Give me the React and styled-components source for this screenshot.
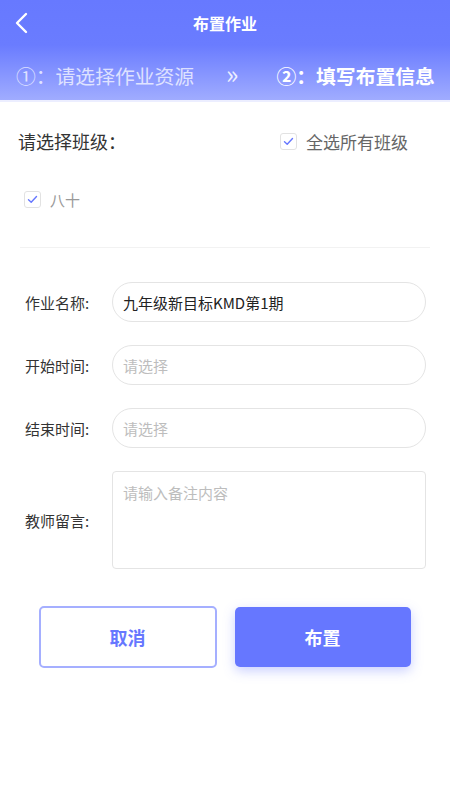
import React from "react";
import styled, { createGlobalStyle } from "styled-components";

const Global = createGlobalStyle`
  html, body { margin: 0; padding: 0; background: #fff; }
  body { font-family: "Noto Sans CJK SC", "Noto Sans", sans-serif; }
  * { box-sizing: border-box; }
`;

const Page = styled.div`
  width: 450px;
  min-height: 800px;
  background: #fff;
`;

const Header = styled.header`
  background: linear-gradient(180deg, #6779ff 0%, #6a7cff 45%, #a0acff 100%);
  border-bottom: 2px solid #eceeff;
`;

const NavBar = styled.div`
  height: 50px;
  display: flex;
  align-items: center;
  justify-content: center;
  position: relative;
`;

const Back = styled.span`
  position: absolute;
  left: 12px;
  top: 10px;
  width: 20px;
  height: 26px;
  display: flex;
`;

const Title = styled.h1`
  margin: 0;
  margin-top: -4px;
  color: #fff;
  font-size: 16px;
  font-weight: 700;
`;

const Steps = styled.div`
  height: 50px;
  display: flex;
  align-items: center;
  padding: 0 0 0 16px;
`;

const Step = styled.span`
  color: #fff;
  font-size: 19.8px;
  font-weight: ${(p) => (p.$active ? 700 : 400)};
  opacity: ${(p) => (p.$active ? 1 : 0.72)};
  white-space: nowrap;
`;

const Arrow = styled.span`
  color: #fff;
  opacity: 0.85;
  font-size: 26px;
  line-height: 1;
  margin: -4px 38px 0 32px;
  font-weight: 400;
`;

const Section = styled.section`
  padding: 0 20px;
`;

const ClassHead = styled.div`
  display: flex;
  justify-content: space-between;
  align-items: center;
  padding: 26px 22px 0 0;
  margin-left: -2px;
`;

const SectionLabel = styled.span`
  font-size: 18px;
  color: #333;
`;

const CheckRow = styled.label`
  display: flex;
  align-items: center;
  gap: 9px;
  font-size: ${(p) => p.$size || 17}px;
  color: ${(p) => p.$color || "#666"};
`;

const Box = styled.span`
  width: 17px;
  height: 17px;
  border: 1px solid #e2e2e2;
  border-radius: 3px;
  display: flex;
  align-items: center;
  justify-content: center;
  background: #fff;
`;

const ClassList = styled.div`
  padding: 35px 0 0 4px;
  height: 93px;
`;

const Divider = styled.div`
  height: 1px;
  background: #f2f2f2;
`;

const Form = styled.div`
  padding: 34px 24px 0 25px;
  display: flex;
  flex-direction: column;
  gap: 23px;
`;

const Row = styled.div`
  display: flex;
  align-items: center;
`;

const Label = styled.span`
  width: 87px;
  flex: none;
  font-size: 15px;
  color: #333;
`;

const Field = styled.div`
  flex: 1;
  height: ${(p) => (p.$tall ? 98 : 40)}px;
  border: 1px solid #e4e4e4;
  border-radius: ${(p) => (p.$tall ? 4 : 20)}px;
  padding: ${(p) => (p.$tall ? "10px 10px" : "0 10px")};
  display: flex;
  align-items: ${(p) => (p.$tall ? "flex-start" : "center")};
  font-size: 15px;
  color: ${(p) => (p.$placeholder ? "#bdbdbd" : "#222")};
`;

const Buttons = styled.div`
  display: flex;
  justify-content: center;
  gap: 18px;
  padding: 37px 0 0 0;
  margin-left: -1px;
`;

const Button = styled.button`
  width: ${(p) => (p.$primary ? 176 : 178)}px;
  height: ${(p) => (p.$primary ? 60 : 62)}px;
  margin-top: ${(p) => (p.$primary ? 1 : 0)}px;
  border-radius: 5px;
  border: ${(p) => (p.$primary ? "none" : "2px solid #a5afff")};
  background: ${(p) => (p.$primary ? "#6677ff" : "#fff")};
  color: ${(p) => (p.$primary ? "#fff" : "#6677ff")};
  font-family: inherit;
  font-size: 18px;
  font-weight: 700;
  box-shadow: ${(p) => (p.$primary ? "0 4px 12px rgba(102,119,255,0.35)" : "none")};
`;

const Check = () => (
  <svg width="11" height="9" viewBox="0 0 11 9">
    <path d="M1.5 4.8 L4.2 7.3 L9.5 1.6" fill="none" stroke="#6677ff" strokeWidth="1.4" strokeLinecap="round" strokeLinejoin="round" />
  </svg>
);

export default function App() {
  return (
    <Page>
      <Global />
      <Header>
        <NavBar>
          <Back>
            <svg width="20" height="26" viewBox="0 0 20 26">
              <path d="M14 4 L5 13 L14 22" fill="none" stroke="#fff" strokeWidth="2.4" strokeLinecap="round" strokeLinejoin="round" />
            </svg>
          </Back>
          <Title>布置作业</Title>
        </NavBar>
        <Steps>
          <Step>①：请选择作业资源</Step>
          <Arrow>»</Arrow>
          <Step $active>②：填写布置信息</Step>
        </Steps>
      </Header>
      <Section>
        <ClassHead>
          <SectionLabel>请选择班级：</SectionLabel>
          <CheckRow>
            <Box><Check /></Box>
            全选所有班级
          </CheckRow>
        </ClassHead>
        <ClassList>
          <CheckRow $size={15} $color="#999">
            <Box><Check /></Box>
            八十
          </CheckRow>
        </ClassList>
        <Divider />
      </Section>
      <Form>
        <Row>
          <Label>作业名称:</Label>
          <Field>九年级新目标KMD第1期</Field>
        </Row>
        <Row>
          <Label>开始时间:</Label>
          <Field $placeholder>请选择</Field>
        </Row>
        <Row>
          <Label>结束时间:</Label>
          <Field $placeholder>请选择</Field>
        </Row>
        <Row>
          <Label>教师留言:</Label>
          <Field $tall $placeholder>请输入备注内容</Field>
        </Row>
      </Form>
      <Buttons>
        <Button>取消</Button>
        <Button $primary>布置</Button>
      </Buttons>
    </Page>
  );
}
